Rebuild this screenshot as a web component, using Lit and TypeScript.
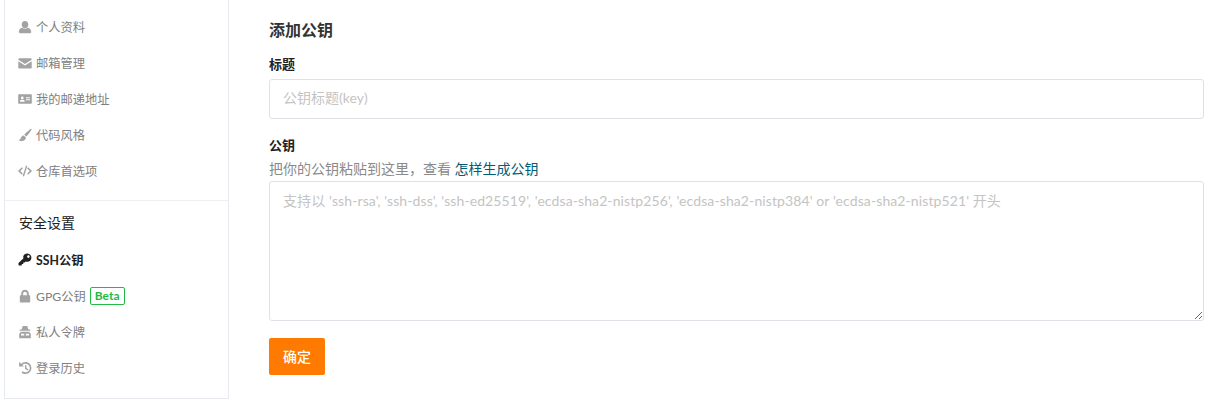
import { LitElement, html, css, svg } from "lit";
import { customElement } from "lit/decorators.js";

const icons: Record<string, unknown> = {
  user: svg`<path d="M7 1c2 0 3.300 1.500 3.300 3.500S9 8.300 7 8.300 3.700 6.500 3.700 4.500 5 1 7 1zM.8 12c0-2.300 1.200-3.700 3.500-4.200.8.700 1.700 1 2.700 1s1.900-.3 2.700-1c2.300.5 3.500 1.900 3.500 4.200 0 .8-.5 1.200-1.200 1.200H2c-.7 0-1.200-.4-1.200-1.200z"/>`,
  mail: svg`<path d="M1.200 2.300h11.600c.5 0 .9.400.9.900v.6L7 8 .3 3.800v-.6c0-.5.400-.9.900-.9zM.3 5.300 7 9.500l6.700-4.200v6.300c0 .6-.4 1-.9 1H1.200c-.5 0-.9-.4-.9-1z"/>`,
  card: svg`<path fill-rule="evenodd" d="M.9 2.300h12.200c.4 0 .7.300.7.700v8c0 .4-.3.700-.7.700H.9c-.4 0-.7-.3-.7-.7V3c0-.4.300-.7.700-.7zM4.300 4.600c-.8 0-1.300.6-1.300 1.300s.5 1.400 1.300 1.400 1.300-.7 1.300-1.400-.5-1.300-1.300-1.300zM2 9.700h4.700c0-1.200-.7-2-1.200-2-.4.200-.8.300-1.200.3s-.8-.1-1.100-.3c-.6 0-1.200.8-1.200 2zM8 5.200v1h3.900v-1zM8 7.300v1h3.900v-1z"/>`,
  brush: svg`<path d="M13 .8c.4 0 .7.300.6.700-.1.500-3.600 5.500-5.100 7L6.200 6.700C7.800 5 12.400 1.100 13 .8zM5.600 7.400l2.300 1.900c.1 1.900-1.200 3.500-3.500 3.800-1.500.2-3-.3-3.900-1 .9-.1 1.700-.5 2.100-1.500.4-1.700 1.600-3.100 3-3.200z"/>`,
  code: svg`<path d="M3.900 3.300l1 1L2.300 7l2.600 2.700-1 1L.4 7.400c-.2-.2-.2-.6 0-.8zM10.100 3.300l3.500 3.300c.2.200.2.600 0 .8l-3.500 3.300-1-1L11.700 7 9.100 4.300zM8 1.600l1.300.4-3.300 10.400-1.300-.4z"/>`,
  key: svg`<path fill-rule="evenodd" d="M9.300.6c2.300 0 4.100 1.800 4.100 4.100s-1.800 4.100-4.100 4.100c-.6 0-1.100-.1-1.600-.3l-1 1.100H5.300v1.500H3.800v1.400H.9L.5 12v-2L5.500 5.200c-.2-.5-.3-.9-.3-1.400 0-1.800 1.900-3.200 4.100-3.200zM10.400 2.300c-.7 0-1.300.6-1.300 1.300s.6 1.300 1.300 1.300 1.300-.6 1.300-1.300-.6-1.300-1.300-1.300z"/>`,
  lock: svg`<path fill-rule="evenodd" d="M7 .8c2.300 0 3.800 1.700 3.800 4.100v1.300h.4c.6 0 1 .4 1 1v5.400c0 .6-.4 1-1 1H2.800c-.6 0-1-.4-1-1V7.200c0-.6.4-1 1-1h.4V4.900C3.200 2.500 4.700.8 7 .8zM7 2.800C5.900 2.800 5.100 3.600 5.100 4.900v1.300h3.800V4.900C8.900 3.600 8.100 2.800 7 2.800z"/>`,
  secret: svg`<path fill-rule="evenodd" d="M4.800 .9h4.400l1.200 3.600h1.900v1.200H1.700V4.500h1.900zM2.600 6.700h8.800l.3 1.100 1.100 1v4.400H1.200V8.800l1.100-1zM3 8.700v1.800h3.200V8.700zM7.800 8.700v1.800H11V8.700z"/>`,
  history: svg`<path d="M7.500 1.100c3.300 0 5.900 2.700 5.900 5.900s-2.600 5.900-5.900 5.900c-1.500 0-2.900-.5-4-1.500l1-1.200c.8.700 1.900 1.100 3 1.100 2.400 0 4.300-1.900 4.300-4.300S9.900 2.700 7.500 2.700c-1.300 0-2.400.5-3.100 1.300l1.500 1.500H1.100V.8l2.100 2.100C4.300 1.800 5.800 1.100 7.500 1.100zM7 4.200h1.400v2.900l2 1.400-.8 1.100L7 7.800z"/>`,
};

@customElement("app-root")
export class AppRoot extends LitElement {
  static styles = css`
    :host {
      display: block;
      width: 1216px;
      height: 400px;
      overflow: hidden;
      background: #fff;
      font-family: Lato, "Noto Sans CJK SC", sans-serif;
      font-size: 12.25px;
      color: #212121;
    }
    .page {
      display: flex;
      padding-left: 4px;
      height: 400px;
    }
    .side {
      width: 225px;
      height: 399px;
      flex: none;
      box-sizing: border-box;
      border-left: 1px solid #e6e9ed;
      border-right: 1px solid #e6e9ed;
      border-bottom: 1px solid #e6e9ed;
      padding-top: 9px;
    }
    .group {
      padding-bottom: 11px;
      border-bottom: 1px solid #eeeff1;
    }
    .group.second {
      border-bottom: 0;
      padding-top: 5px;
    }
    .head {
      height: 36px;
      line-height: 33px;
      padding-left: 14px;
      font-size: 14px;
      color: #212121;
    }
    .item {
      display: flex;
      align-items: center;
      height: 36px;
      padding-left: 13px;
      color: #808080;
      gap: 4px;
      white-space: nowrap;
    }
    .item span {
      line-height: 16px;
    }
    .item span:not(.beta) {
      margin-top: 2px;
    }
    .item svg {
      width: 14px;
      height: 14px;
      fill: #a3a3a3;
      flex: none;
    }
    .item.active {
      color: #212121;
      font-weight: 700;
    }
    .item.active svg {
      fill: #212121;
    }
    .item .beta {
      box-sizing: border-box;
      height: 18px;
      line-height: 16px;
      padding: 0 4px;
      border: 1px solid #21ba45;
      border-radius: 2px;
      color: #21ba45;
      font-weight: 700;
      font-size: 12px;
    }
    .main {
      width: 935px;
      margin-left: 40px;
      flex: none;
      padding-top: 18px;
    }
    h3 {
      margin: 0;
      font-size: 16px;
      line-height: 24px;
      font-weight: 700;
      color: #333;
    }
    label {
      display: block;
      font-size: 13px;
      font-weight: 700;
      line-height: 18px;
      color: #212121;
    }
    .l1 {
      margin-top: 13px;
      margin-bottom: 6px;
    }
    .l2 {
      margin-top: 17px;
    }
    .box {
      display: block;
      width: 100%;
      box-sizing: border-box;
      border: 1px solid #e0e1e6;
      border-radius: 3px;
      outline: 0;
      margin: 0;
      background: #fff;
      font: 14px Lato, "Noto Sans CJK SC", sans-serif;
      color: #212121;
      padding: 0 13px;
    }
    .box::placeholder {
      color: #c4c4c4;
      opacity: 1;
    }
    input.box {
      height: 40px;
      padding-bottom: 4px;
    }
    textarea.box {
      height: 140px;
      padding-top: 9px;
      line-height: 19px;
      letter-spacing: 0.1px;
      resize: vertical;
    }
    .hint {
      font-size: 14px;
      line-height: 18px;
      color: #8a8a8a;
      margin-top: 6px;
      margin-bottom: 3px;
    }
    .hint a {
      color: #005d75;
      text-decoration: none;
    }
    button {
      display: block;
      margin-top: 17px;
      width: 56px;
      height: 37px;
      border: 0;
      border-radius: 2px;
      padding: 0 0 2px;
      background: #ff7a00;
      color: #fff;
      font: 500 14px "Noto Sans CJK SC", Lato, sans-serif;
    }
  `;

  private item(icon: string, label: unknown, active = false) {
    return html`<div class="item ${active ? "active" : ""}">
      <svg viewBox="0 0 14 14">${icons[icon]}</svg><span>${label}</span>
    </div>`;
  }

  render() {
    return html`<div class="page">
      <nav class="side">
        <div class="group">
          ${this.item("user", "个人资料")}
          ${this.item("mail", "邮箱管理")}
          ${this.item("card", "我的邮递地址")}
          ${this.item("brush", "代码风格")}
          ${this.item("code", "仓库首选项")}
        </div>
        <div class="group second">
          <div class="head">安全设置</div>
          ${this.item("key", "SSH公钥", true)}
          <div class="item">
            <svg viewBox="0 0 14 14">${icons.lock}</svg><span>GPG公钥</span><span class="beta">Beta</span>
          </div>
          ${this.item("secret", "私人令牌")}
          ${this.item("history", "登录历史")}
        </div>
      </nav>
      <main class="main">
        <h3>添加公钥</h3>
        <label class="l1">标题</label>
        <input class="box" placeholder="公钥标题(key)" />
        <label class="l2">公钥</label>
        <div class="hint">把你的公钥粘贴到这里，查看 <a href="#">怎样生成公钥</a></div>
        <textarea class="box" placeholder="支持以 'ssh-rsa', 'ssh-dss', 'ssh-ed25519', 'ecdsa-sha2-nistp256', 'ecdsa-sha2-nistp384' or 'ecdsa-sha2-nistp521' 开头"></textarea>
        <button>确定</button>
      </main>
    </div>`;
  }
}
